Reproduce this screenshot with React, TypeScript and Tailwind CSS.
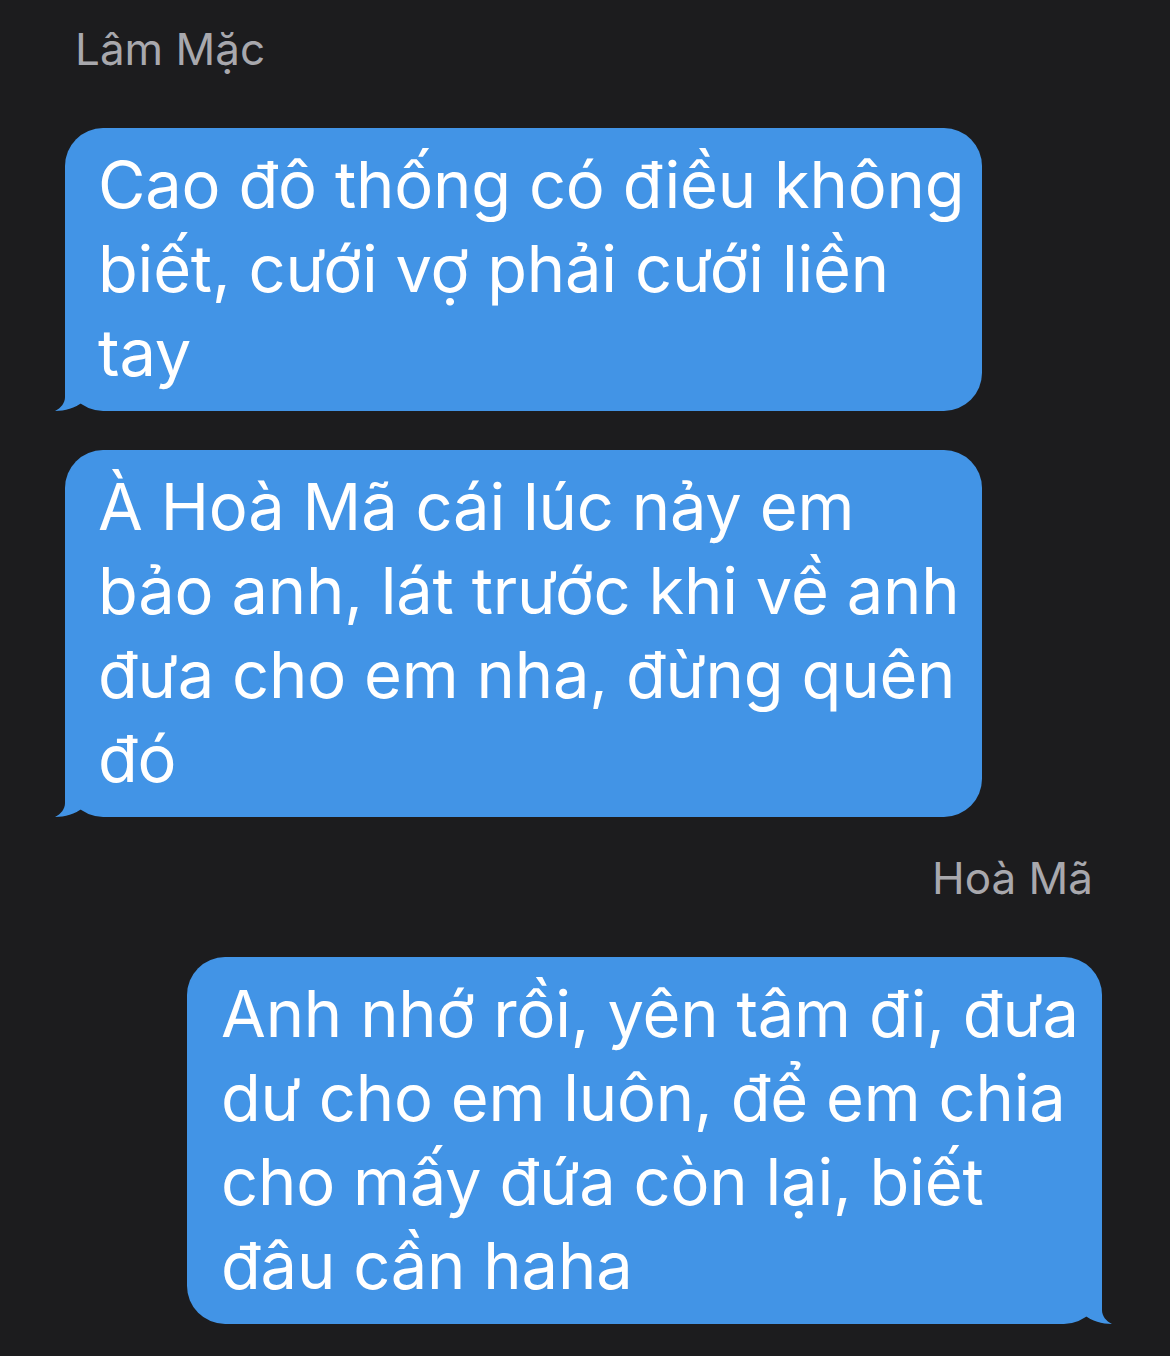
import type { ReactNode } from "react";

function Tail({ side }: { side: "left" | "right" }) {
  return (
    <svg
      className={`pointer-events-none absolute bottom-0 h-[50px] w-[50px] ${
        side === "left" ? "left-[-12px]" : "right-[-12px] -scale-x-100"
      }`}
      viewBox="0 0 50 50"
    >
      <path d="M12 0 L12 36 C12 42 8 47 2 50 C12 50 22 47 30 41 L30 0 Z" fill="#4294e6" />
    </svg>
  );
}

function Bubble({
  side,
  width,
  children,
}: {
  side: "left" | "right";
  width: string;
  children: ReactNode;
}) {
  return (
    <div
      className={`relative ${width} rounded-[38px] bg-[#4294e6] pt-[15px] pb-[16px] text-[65px] leading-[84px] tracking-[-0.2px] whitespace-nowrap text-white ${
        side === "left" ? "ml-[65px] pl-[33px]" : "ml-auto mr-[68px] pl-[34px]"
      }`}
    >
      {children}
      <Tail side={side} />
    </div>
  );
}

export default function App() {
  return (
    <div className="min-h-[1356px] w-full bg-[#1c1c1e] pt-[27px] font-['Inter','Noto_Sans',sans-serif] antialiased">
      <div className="pl-[75px] text-[44px] leading-none text-[#a8a8ad]">Lâm Mặc</div>

      <div className="mt-[57px]">
        <Bubble side="left" width="w-[917px]">
          Cao đô thống có điều không
          <br />
          biết, cưới vợ phải cưới liền
          <br />
          tay
        </Bubble>
      </div>

      <div className="mt-[39px]">
        <Bubble side="left" width="w-[917px]">
          À Hoà Mã cái lúc nảy em
          <br />
          bảo anh, lát trước khi về anh
          <br />
          đưa cho em nha, đừng quên
          <br />
          đó
        </Bubble>
      </div>

      <div className="mt-[39px] pr-[77px] text-right text-[44px] leading-none text-[#a8a8ad]">Hoà Mã</div>

      <div className="mt-[57px] pb-[31px]">
        <Bubble side="right" width="w-[915px]">
          Anh nhớ rồi, yên tâm đi, đưa
          <br />
          dư cho em luôn, để em chia
          <br />
          cho mấy đứa còn lại, biết
          <br />
          đâu cần haha
        </Bubble>
      </div>
    </div>
  );
}
